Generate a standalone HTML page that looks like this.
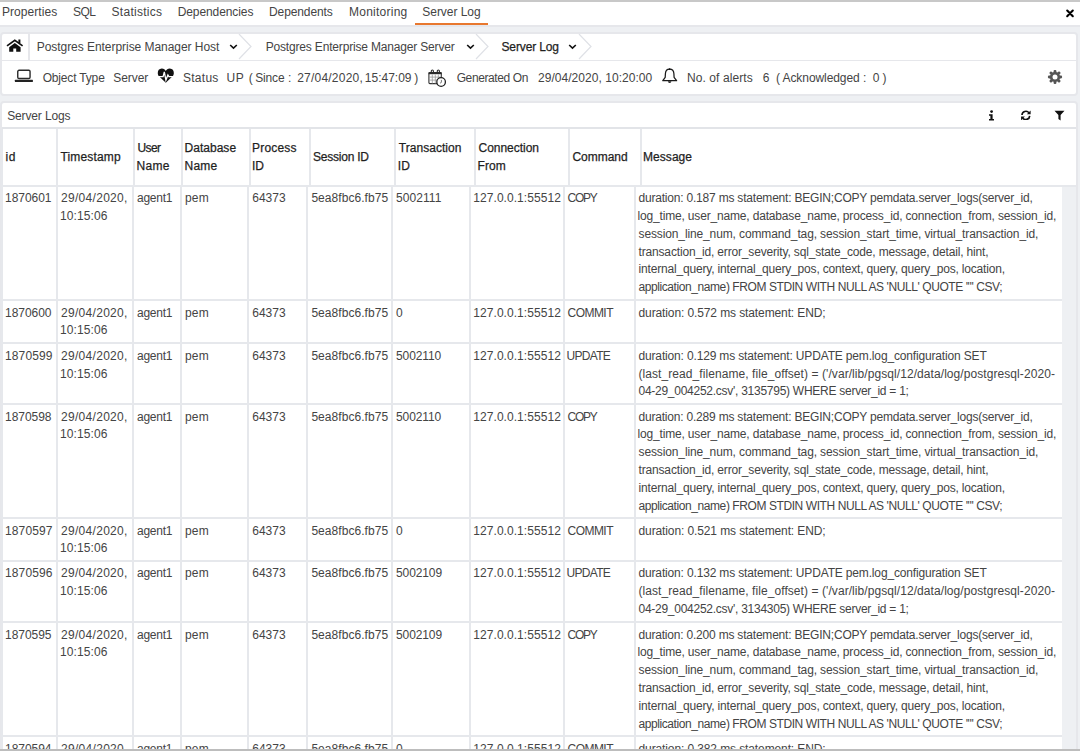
<!DOCTYPE html><html><head><meta charset="utf-8"><style>
*{box-sizing:border-box}
html,body{margin:0;padding:0}
body{width:1080px;height:752px;overflow:hidden;position:relative;background:#fff;font-family:"Liberation Sans",sans-serif;font-size:12px;color:#444}
.t{position:absolute;white-space:nowrap;line-height:14px}
.abs{position:absolute}
.hd{color:#1f1f1f;-webkit-text-stroke:0.25px #1f1f1f}
</style></head><body><div class="abs" style="left:0;top:0;width:1080px;height:2px;background:#c8c8c8"></div>
<div class="abs" style="left:0;top:25px;width:1080px;height:724px;background:#eef0f3"></div>
<div class="t" style="left:2.00px;top:5.00px;letter-spacing:0.056px">Properties</div>
<div class="t" style="left:73.00px;top:5.00px;letter-spacing:-0.600px">SQL</div>
<div class="t" style="left:111.60px;top:5.00px;letter-spacing:0.267px">Statistics</div>
<div class="t" style="left:177.70px;top:5.00px;letter-spacing:-0.091px">Dependencies</div>
<div class="t" style="left:269.00px;top:5.00px;letter-spacing:-0.100px">Dependents</div>
<div class="t" style="left:349.00px;top:5.00px;letter-spacing:0.244px">Monitoring</div>
<div class="t" style="left:422.30px;top:5.00px;letter-spacing:-0.044px">Server Log</div>
<div class="abs" style="left:415px;top:23px;width:73px;height:2px;background:#e8782f"></div>
<svg class="abs" style="left:1064px;top:7px" width="12" height="12" viewBox="0 0 12 12"><path d="M3.2 3.5L8.8 9.2M8.8 3.5L3.2 9.2" stroke="#000" stroke-width="2.1" stroke-linecap="round"/></svg>
<div class="abs" style="left:0;top:25px;width:1080px;height:2px;background:#e6e7eb"></div>
<div class="abs" style="left:2px;top:33.5px;width:1074px;height:60.3px;background:#fff;border-radius:2px;box-shadow:0 0 0 2px #e6e7eb"></div>
<div class="abs" style="left:28px;top:33.5px;width:2px;height:26px;background:#e6e7eb"></div>
<div class="abs" style="left:2px;top:59.5px;width:1074px;height:1.5px;background:#e6e7eb"></div>
<svg class="abs" style="left:6px;top:38px" width="18" height="16" viewBox="0 0 18 16"><path d="M1 7.9L8.8 2.3L16.6 7.9" stroke="#111" stroke-width="1.7" fill="none"/><rect x="12.4" y="1.5" width="2" height="3.5" fill="#111"/><path d="M3.2 9.3L8.8 5.1L14.6 9.3V13.8H10.2V10.5H7.3V13.8H3.2z" fill="#111"/></svg>
<div class="t" style="left:36.70px;top:39.70px;letter-spacing:-0.045px">Postgres Enterprise Manager Host</div>
<div class="t" style="left:265.70px;top:39.70px;letter-spacing:-0.173px">Postgres Enterprise Manager Server</div>
<div class="t hd" style="left:501.50px;top:39.70px;letter-spacing:-0.133px">Server Log</div>
<svg class="abs" style="left:229px;top:43px" width="10" height="8" viewBox="0 0 10 8"><path d="M1.2 2L4.5 5.1L7.8 2" stroke="#111" stroke-width="1.6" fill="none"/></svg>
<svg class="abs" style="left:465.7px;top:43px" width="10" height="8" viewBox="0 0 10 8"><path d="M1.2 2L4.5 5.1L7.8 2" stroke="#111" stroke-width="1.6" fill="none"/></svg>
<svg class="abs" style="left:568px;top:43px" width="10" height="8" viewBox="0 0 10 8"><path d="M1.2 2L4.5 5.1L7.8 2" stroke="#111" stroke-width="1.6" fill="none"/></svg>
<svg class="abs" style="left:237.9px;top:33.5px" width="16" height="26" viewBox="0 0 16 26"><path d="M1 0L13 12.5L1 25" stroke="#dfe1e6" stroke-width="1.2" fill="none"/></svg>
<svg class="abs" style="left:475.3px;top:33.5px" width="16" height="26" viewBox="0 0 16 26"><path d="M1 0L13 12.5L1 25" stroke="#dfe1e6" stroke-width="1.2" fill="none"/></svg>
<svg class="abs" style="left:577.5px;top:33.5px" width="16" height="26" viewBox="0 0 16 26"><path d="M1 0L13 12.5L1 25" stroke="#dfe1e6" stroke-width="1.2" fill="none"/></svg>
<svg class="abs" style="left:14px;top:69px" width="20" height="14" viewBox="0 0 20 14"><rect x="3.75" y="1.3" width="12.3" height="8.2" rx="1.3" fill="none" stroke="#2a2a2a" stroke-width="1.4"/><rect x="0.9" y="10.8" width="18" height="2.1" rx=".5" fill="#222"/></svg>
<div class="t" style="left:42.70px;top:71.00px;letter-spacing:-0.170px">Object Type</div>
<div class="t" style="left:113.30px;top:71.00px;letter-spacing:-0.060px">Server</div>
<svg class="abs" style="left:157px;top:68px" width="18" height="15" viewBox="0 0 18 15"><path d="M8.8 14.8L2 8.3C-.2 6 .5.6 4.8.6C6.9.6 8 1.8 8.8 3C9.6 1.8 10.7.6 12.8.6C17.1.6 17.8 6 15.6 8.3Z" fill="#111"/><path d="M0 8.6H6.1L7.3 3.8L8.9 12.1L10.9 6.9L11.9 8.6H18" stroke="#fff" stroke-width="1.3" fill="none" stroke-linejoin="miter"/></svg>
<div class="t" style="left:183.00px;top:71.00px;letter-spacing:0.260px">Status</div>
<div class="t" style="left:226.40px;top:71.00px;letter-spacing:0.600px">UP</div>
<div class="t" style="left:248.80px;top:71.00px;letter-spacing:0.000px">(</div>
<div class="t" style="left:255.20px;top:71.00px;letter-spacing:-0.150px">Since</div>
<div class="t" style="left:287.90px;top:71.00px;letter-spacing:0.000px">:</div>
<div class="t" style="left:297.20px;top:71.00px;letter-spacing:0.220px">27/04/2020,</div>
<div class="t" style="left:364.80px;top:71.00px;letter-spacing:0.000px">15:47:09</div>
<div class="t" style="left:414.20px;top:71.00px;letter-spacing:0.000px">)</div>
<svg class="abs" style="left:427px;top:69px" width="20" height="19" viewBox="0 0 20 19"><rect x="1.9" y="3.6" width="12.4" height="11" rx="1" fill="none" stroke="#333" stroke-width="1.1"/><rect x="1.6" y="3.2" width="13" height="2" fill="#2a2a2a"/><path d="M4.3 4V2.1a1.05 1.05 0 0 1 2.1 0V4M10.3 4V2.1a1.05 1.05 0 0 1 2.1 0V4" stroke="#2a2a2a" stroke-width="1.1" fill="none"/><path d="M2 8.1h12.2M2 11.1h12.2M5.3 5.5v9M8.3 5.5v9M11.3 5.5v4" stroke="#999" stroke-width=".8"/><circle cx="14.1" cy="13" r="4.3" fill="#fff" stroke="#222" stroke-width="1.3"/><path d="M14.4 10.9V13.4L13 14.2" stroke="#666" stroke-width=".9" fill="none"/></svg>
<div class="t" style="left:456.70px;top:71.00px;letter-spacing:-0.400px">Generated On</div>
<div class="t" style="left:538.00px;top:71.00px;letter-spacing:0.042px">29/04/2020, 10:20:00</div>
<svg class="abs" style="left:661px;top:68px" width="18" height="17" viewBox="0 0 18 17"><path d="M8.6 1.1C5.9 1.1 4.5 3.3 4.4 5.8L4.2 9.3L1.8 12.7H15.6L13.1 9.3L12.9 5.8C12.8 3.3 11.4 1.1 8.6 1.1Z" fill="none" stroke="#1a1a1a" stroke-width="1.25" stroke-linejoin="round"/><circle cx="8.6" cy="1.2" r="0.9" fill="#111"/><path d="M6.9 13.3a1.75 1.75 0 0 0 3.5 0z" fill="#222"/></svg>
<div class="t" style="left:687.00px;top:71.00px;letter-spacing:0.083px">No. of alerts</div>
<div class="t" style="left:762.80px;top:71.00px;letter-spacing:0.000px">6</div>
<div class="t" style="left:776.00px;top:71.00px;letter-spacing:-0.075px">( Acknowledged :&nbsp; 0 )</div>
<svg class="abs" style="left:1046.9px;top:68.8px" width="16" height="16" viewBox="0 0 16 16"><rect x="6.6" y="0.9" width="2.8" height="4" rx="1.1" fill="#555" transform="rotate(0 8 8)"/><rect x="6.6" y="0.9" width="2.8" height="4" rx="1.1" fill="#555" transform="rotate(45 8 8)"/><rect x="6.6" y="0.9" width="2.8" height="4" rx="1.1" fill="#555" transform="rotate(90 8 8)"/><rect x="6.6" y="0.9" width="2.8" height="4" rx="1.1" fill="#555" transform="rotate(135 8 8)"/><rect x="6.6" y="0.9" width="2.8" height="4" rx="1.1" fill="#555" transform="rotate(180 8 8)"/><rect x="6.6" y="0.9" width="2.8" height="4" rx="1.1" fill="#555" transform="rotate(225 8 8)"/><rect x="6.6" y="0.9" width="2.8" height="4" rx="1.1" fill="#555" transform="rotate(270 8 8)"/><rect x="6.6" y="0.9" width="2.8" height="4" rx="1.1" fill="#555" transform="rotate(315 8 8)"/><circle cx="8" cy="8" r="5.1" fill="#555"/><circle cx="8" cy="8" r="2.5" fill="#fff"/></svg>
<div class="abs" style="left:2px;top:103px;width:1074px;height:646px;background:#fff;border-radius:2px 2px 0 0;box-shadow:0 0 0 2px #e6e7eb"></div>
<div class="t" style="left:7.20px;top:108.70px;letter-spacing:-0.140px">Server Logs</div>
<div class="abs" style="left:2px;top:127px;width:1074px;height:2px;background:#e2e4e8"></div>
<svg class="abs" style="left:988px;top:109.7px" width="7" height="11" viewBox="0 0 7 11"><circle cx="3.6" cy="1.6" r="1.4" fill="#111"/><path d="M1 4.2h3.6v4.8h1.4v1.6H1V9h1.4V5.8H1z" fill="#111"/></svg>
<svg class="abs" style="left:1019.6px;top:109.7px" width="11.7" height="10.8" viewBox="0 0 13 12"><path d="M2.2 5.5A4.3 4.3 0 0 1 10 3.2" stroke="#111" stroke-width="1.8" fill="none"/><path d="M11.8.5v4.2H7.6z" fill="#111"/><path d="M10.8 6.5A4.3 4.3 0 0 1 3 8.8" stroke="#111" stroke-width="1.8" fill="none"/><path d="M1.2 11.5V7.3h4.2z" fill="#111"/></svg>
<svg class="abs" style="left:1054px;top:110px" width="11" height="11" viewBox="0 0 11 11"><path d="M.5 .8h10L6.6 5v5.5L4.4 9V5z" fill="#111"/></svg>
<div class="abs" style="left:1px;top:129px;width:2px;height:56.5px;background:#e6e8ec"></div>
<div class="abs" style="left:56px;top:129px;width:2px;height:56.5px;background:#e6e8ec"></div>
<div class="abs" style="left:133px;top:129px;width:2px;height:56.5px;background:#e6e8ec"></div>
<div class="abs" style="left:181px;top:129px;width:2px;height:56.5px;background:#e6e8ec"></div>
<div class="abs" style="left:248.6px;top:129px;width:2px;height:56.5px;background:#e6e8ec"></div>
<div class="abs" style="left:308.6px;top:129px;width:2px;height:56.5px;background:#e6e8ec"></div>
<div class="abs" style="left:394.3px;top:129px;width:2px;height:56.5px;background:#e6e8ec"></div>
<div class="abs" style="left:474px;top:129px;width:2px;height:56.5px;background:#e6e8ec"></div>
<div class="abs" style="left:568px;top:129px;width:2px;height:56.5px;background:#e6e8ec"></div>
<div class="abs" style="left:639.6px;top:129px;width:2px;height:56.5px;background:#e6e8ec"></div>
<div class="abs" style="left:1px;top:184.5px;width:1075px;height:2px;background:#e6e8ec"></div>
<div class="t hd" style="left:5.50px;top:149.90px;letter-spacing:0.600px">id</div>
<div class="t hd" style="left:60.50px;top:149.90px;letter-spacing:0.162px">Timestamp</div>
<div class="t hd" style="left:137.50px;top:141.10px;letter-spacing:-0.633px">User</div>
<div class="t hd" style="left:136.50px;top:159.00px;letter-spacing:0.300px">Name</div>
<div class="t hd" style="left:184.50px;top:141.10px;letter-spacing:0.029px">Database</div>
<div class="t hd" style="left:184.50px;top:159.00px;letter-spacing:0.233px">Name</div>
<div class="t hd" style="left:252.10px;top:141.10px;letter-spacing:0.183px">Process</div>
<div class="t hd" style="left:252.10px;top:159.00px;letter-spacing:-0.100px">ID</div>
<div class="t hd" style="left:313.10px;top:149.90px;letter-spacing:-0.233px">Session ID</div>
<div class="t hd" style="left:398.80px;top:141.10px;letter-spacing:0.040px">Transaction</div>
<div class="t hd" style="left:397.80px;top:159.00px;letter-spacing:0.000px">ID</div>
<div class="t hd" style="left:478.50px;top:141.10px;letter-spacing:-0.022px">Connection</div>
<div class="t hd" style="left:477.50px;top:159.00px;letter-spacing:0.067px">From</div>
<div class="t hd" style="left:572.50px;top:149.90px;letter-spacing:-0.050px">Command</div>
<div class="t hd" style="left:643.10px;top:149.90px;letter-spacing:0.033px">Message</div>
<div class="abs" style="left:1px;top:185.6px;width:2px;height:114.4px;background:#e6e8ec"></div>
<div class="abs" style="left:56px;top:185.6px;width:2px;height:114.4px;background:#e6e8ec"></div>
<div class="abs" style="left:132px;top:185.6px;width:2px;height:114.4px;background:#e6e8ec"></div>
<div class="abs" style="left:180px;top:185.6px;width:2px;height:114.4px;background:#e6e8ec"></div>
<div class="abs" style="left:247.2px;top:185.6px;width:2px;height:114.4px;background:#e6e8ec"></div>
<div class="abs" style="left:306.4px;top:185.6px;width:2px;height:114.4px;background:#e6e8ec"></div>
<div class="abs" style="left:391px;top:185.6px;width:2px;height:114.4px;background:#e6e8ec"></div>
<div class="abs" style="left:469.3px;top:185.6px;width:2px;height:114.4px;background:#e6e8ec"></div>
<div class="abs" style="left:562.5px;top:185.6px;width:2px;height:114.4px;background:#e6e8ec"></div>
<div class="abs" style="left:633.5px;top:185.6px;width:2px;height:114.4px;background:#e6e8ec"></div>
<div class="t" style="left:5.00px;top:191.10px;letter-spacing:-0.033px">1870601</div>
<div class="t" style="left:61.00px;top:191.10px;letter-spacing:0.300px">29/04/2020,</div>
<div class="t" style="left:60.00px;top:208.90px;letter-spacing:0.100px">10:15:06</div>
<div class="t" style="left:137.00px;top:191.10px;letter-spacing:-0.260px">agent1</div>
<div class="t" style="left:185.00px;top:191.10px;letter-spacing:0.200px">pem</div>
<div class="t" style="left:252.20px;top:191.10px;letter-spacing:0.025px">64373</div>
<div class="t" style="left:311.40px;top:191.10px;letter-spacing:0.050px">5ea8fbc6.fb75</div>
<div class="t" style="left:396.00px;top:191.10px;letter-spacing:0.067px">5002111</div>
<div class="t" style="left:473.30px;top:191.10px;letter-spacing:0.057px">127.0.0.1:55512</div>
<div class="t" style="left:567.50px;top:191.10px;letter-spacing:-1.267px">COPY</div>
<div class="t" style="left:638.50px;top:191.10px;letter-spacing:-0.204px">duration: 0.187 ms statement: BEGIN;COPY pemdata.server_logs(server_id,</div>
<div class="t" style="left:637.50px;top:208.90px;letter-spacing:-0.171px">log_time, user_name, database_name, process_id, connection_from, session_id,</div>
<div class="t" style="left:638.50px;top:226.70px;letter-spacing:-0.123px">session_line_num, command_tag, session_start_time, virtual_transaction_id,</div>
<div class="t" style="left:638.50px;top:244.50px;letter-spacing:-0.162px">transaction_id, error_severity, sql_state_code, message, detail, hint,</div>
<div class="t" style="left:638.50px;top:262.30px;letter-spacing:-0.177px">internal_query, internal_query_pos, context, query, query_pos, location,</div>
<div class="t" style="left:638.50px;top:280.10px;letter-spacing:-0.418px">application_name) FROM STDIN WITH NULL AS 'NULL' QUOTE '"' CSV;</div>
<div class="abs" style="left:1px;top:300px;width:2px;height:43.19999999999999px;background:#e6e8ec"></div>
<div class="abs" style="left:56px;top:300px;width:2px;height:43.19999999999999px;background:#e6e8ec"></div>
<div class="abs" style="left:132px;top:300px;width:2px;height:43.19999999999999px;background:#e6e8ec"></div>
<div class="abs" style="left:180px;top:300px;width:2px;height:43.19999999999999px;background:#e6e8ec"></div>
<div class="abs" style="left:247.2px;top:300px;width:2px;height:43.19999999999999px;background:#e6e8ec"></div>
<div class="abs" style="left:306.4px;top:300px;width:2px;height:43.19999999999999px;background:#e6e8ec"></div>
<div class="abs" style="left:391px;top:300px;width:2px;height:43.19999999999999px;background:#e6e8ec"></div>
<div class="abs" style="left:469.3px;top:300px;width:2px;height:43.19999999999999px;background:#e6e8ec"></div>
<div class="abs" style="left:562.5px;top:300px;width:2px;height:43.19999999999999px;background:#e6e8ec"></div>
<div class="abs" style="left:633.5px;top:300px;width:2px;height:43.19999999999999px;background:#e6e8ec"></div>
<div class="abs" style="left:1px;top:299px;width:1061px;height:2px;background:#e6e8ec"></div>
<div class="t" style="left:5.00px;top:305.50px;letter-spacing:-0.033px">1870600</div>
<div class="t" style="left:61.00px;top:305.50px;letter-spacing:0.300px">29/04/2020,</div>
<div class="t" style="left:60.00px;top:323.30px;letter-spacing:0.100px">10:15:06</div>
<div class="t" style="left:137.00px;top:305.50px;letter-spacing:-0.260px">agent1</div>
<div class="t" style="left:185.00px;top:305.50px;letter-spacing:0.200px">pem</div>
<div class="t" style="left:252.20px;top:305.50px;letter-spacing:0.025px">64373</div>
<div class="t" style="left:311.40px;top:305.50px;letter-spacing:0.050px">5ea8fbc6.fb75</div>
<div class="t" style="left:396.00px;top:305.50px;letter-spacing:0.000px">0</div>
<div class="t" style="left:473.30px;top:305.50px;letter-spacing:0.057px">127.0.0.1:55512</div>
<div class="t" style="left:567.50px;top:305.50px;letter-spacing:-0.540px">COMMIT</div>
<div class="t" style="left:638.50px;top:305.50px;letter-spacing:-0.109px">duration: 0.572 ms statement: END;</div>
<div class="abs" style="left:1px;top:343.2px;width:2px;height:60.900000000000034px;background:#e6e8ec"></div>
<div class="abs" style="left:56px;top:343.2px;width:2px;height:60.900000000000034px;background:#e6e8ec"></div>
<div class="abs" style="left:132px;top:343.2px;width:2px;height:60.900000000000034px;background:#e6e8ec"></div>
<div class="abs" style="left:180px;top:343.2px;width:2px;height:60.900000000000034px;background:#e6e8ec"></div>
<div class="abs" style="left:247.2px;top:343.2px;width:2px;height:60.900000000000034px;background:#e6e8ec"></div>
<div class="abs" style="left:306.4px;top:343.2px;width:2px;height:60.900000000000034px;background:#e6e8ec"></div>
<div class="abs" style="left:391px;top:343.2px;width:2px;height:60.900000000000034px;background:#e6e8ec"></div>
<div class="abs" style="left:469.3px;top:343.2px;width:2px;height:60.900000000000034px;background:#e6e8ec"></div>
<div class="abs" style="left:562.5px;top:343.2px;width:2px;height:60.900000000000034px;background:#e6e8ec"></div>
<div class="abs" style="left:633.5px;top:343.2px;width:2px;height:60.900000000000034px;background:#e6e8ec"></div>
<div class="abs" style="left:1px;top:342.2px;width:1061px;height:2px;background:#e6e8ec"></div>
<div class="t" style="left:5.00px;top:348.70px;letter-spacing:0.133px">1870599</div>
<div class="t" style="left:61.00px;top:348.70px;letter-spacing:0.300px">29/04/2020,</div>
<div class="t" style="left:60.00px;top:366.50px;letter-spacing:0.100px">10:15:06</div>
<div class="t" style="left:137.00px;top:348.70px;letter-spacing:-0.260px">agent1</div>
<div class="t" style="left:185.00px;top:348.70px;letter-spacing:0.200px">pem</div>
<div class="t" style="left:252.20px;top:348.70px;letter-spacing:0.025px">64373</div>
<div class="t" style="left:311.40px;top:348.70px;letter-spacing:0.050px">5ea8fbc6.fb75</div>
<div class="t" style="left:396.00px;top:348.70px;letter-spacing:-0.100px">5002110</div>
<div class="t" style="left:473.30px;top:348.70px;letter-spacing:0.057px">127.0.0.1:55512</div>
<div class="t" style="left:566.50px;top:348.70px;letter-spacing:-0.700px">UPDATE</div>
<div class="t" style="left:638.50px;top:348.70px;letter-spacing:-0.159px">duration: 0.129 ms statement: UPDATE pem.log_configuration SET</div>
<div class="t" style="left:638.50px;top:366.50px;letter-spacing:0.072px">(last_read_filename, file_offset) = ('/var/lib/pgsql/12/data/log/postgresql-2020-</div>
<div class="t" style="left:638.50px;top:384.30px;letter-spacing:-0.264px">04-29_004252.csv', 3135795) WHERE server_id = 1;</div>
<div class="abs" style="left:1px;top:404.1px;width:2px;height:114.0px;background:#e6e8ec"></div>
<div class="abs" style="left:56px;top:404.1px;width:2px;height:114.0px;background:#e6e8ec"></div>
<div class="abs" style="left:132px;top:404.1px;width:2px;height:114.0px;background:#e6e8ec"></div>
<div class="abs" style="left:180px;top:404.1px;width:2px;height:114.0px;background:#e6e8ec"></div>
<div class="abs" style="left:247.2px;top:404.1px;width:2px;height:114.0px;background:#e6e8ec"></div>
<div class="abs" style="left:306.4px;top:404.1px;width:2px;height:114.0px;background:#e6e8ec"></div>
<div class="abs" style="left:391px;top:404.1px;width:2px;height:114.0px;background:#e6e8ec"></div>
<div class="abs" style="left:469.3px;top:404.1px;width:2px;height:114.0px;background:#e6e8ec"></div>
<div class="abs" style="left:562.5px;top:404.1px;width:2px;height:114.0px;background:#e6e8ec"></div>
<div class="abs" style="left:633.5px;top:404.1px;width:2px;height:114.0px;background:#e6e8ec"></div>
<div class="abs" style="left:1px;top:403.1px;width:1061px;height:2px;background:#e6e8ec"></div>
<div class="t" style="left:5.00px;top:409.60px;letter-spacing:-0.033px">1870598</div>
<div class="t" style="left:61.00px;top:409.60px;letter-spacing:0.300px">29/04/2020,</div>
<div class="t" style="left:60.00px;top:427.40px;letter-spacing:0.100px">10:15:06</div>
<div class="t" style="left:137.00px;top:409.60px;letter-spacing:-0.260px">agent1</div>
<div class="t" style="left:185.00px;top:409.60px;letter-spacing:0.200px">pem</div>
<div class="t" style="left:252.20px;top:409.60px;letter-spacing:0.025px">64373</div>
<div class="t" style="left:311.40px;top:409.60px;letter-spacing:0.050px">5ea8fbc6.fb75</div>
<div class="t" style="left:396.00px;top:409.60px;letter-spacing:-0.100px">5002110</div>
<div class="t" style="left:473.30px;top:409.60px;letter-spacing:0.057px">127.0.0.1:55512</div>
<div class="t" style="left:567.50px;top:409.60px;letter-spacing:-1.267px">COPY</div>
<div class="t" style="left:638.50px;top:409.60px;letter-spacing:-0.204px">duration: 0.289 ms statement: BEGIN;COPY pemdata.server_logs(server_id,</div>
<div class="t" style="left:637.50px;top:427.40px;letter-spacing:-0.171px">log_time, user_name, database_name, process_id, connection_from, session_id,</div>
<div class="t" style="left:638.50px;top:445.20px;letter-spacing:-0.123px">session_line_num, command_tag, session_start_time, virtual_transaction_id,</div>
<div class="t" style="left:638.50px;top:463.00px;letter-spacing:-0.162px">transaction_id, error_severity, sql_state_code, message, detail, hint,</div>
<div class="t" style="left:638.50px;top:480.80px;letter-spacing:-0.177px">internal_query, internal_query_pos, context, query, query_pos, location,</div>
<div class="t" style="left:638.50px;top:498.60px;letter-spacing:-0.418px">application_name) FROM STDIN WITH NULL AS 'NULL' QUOTE '"' CSV;</div>
<div class="abs" style="left:1px;top:518.1px;width:2px;height:42.60000000000002px;background:#e6e8ec"></div>
<div class="abs" style="left:56px;top:518.1px;width:2px;height:42.60000000000002px;background:#e6e8ec"></div>
<div class="abs" style="left:132px;top:518.1px;width:2px;height:42.60000000000002px;background:#e6e8ec"></div>
<div class="abs" style="left:180px;top:518.1px;width:2px;height:42.60000000000002px;background:#e6e8ec"></div>
<div class="abs" style="left:247.2px;top:518.1px;width:2px;height:42.60000000000002px;background:#e6e8ec"></div>
<div class="abs" style="left:306.4px;top:518.1px;width:2px;height:42.60000000000002px;background:#e6e8ec"></div>
<div class="abs" style="left:391px;top:518.1px;width:2px;height:42.60000000000002px;background:#e6e8ec"></div>
<div class="abs" style="left:469.3px;top:518.1px;width:2px;height:42.60000000000002px;background:#e6e8ec"></div>
<div class="abs" style="left:562.5px;top:518.1px;width:2px;height:42.60000000000002px;background:#e6e8ec"></div>
<div class="abs" style="left:633.5px;top:518.1px;width:2px;height:42.60000000000002px;background:#e6e8ec"></div>
<div class="abs" style="left:1px;top:517.1px;width:1061px;height:2px;background:#e6e8ec"></div>
<div class="t" style="left:5.00px;top:523.60px;letter-spacing:0.133px">1870597</div>
<div class="t" style="left:61.00px;top:523.60px;letter-spacing:0.300px">29/04/2020,</div>
<div class="t" style="left:60.00px;top:541.40px;letter-spacing:0.100px">10:15:06</div>
<div class="t" style="left:137.00px;top:523.60px;letter-spacing:-0.260px">agent1</div>
<div class="t" style="left:185.00px;top:523.60px;letter-spacing:0.200px">pem</div>
<div class="t" style="left:252.20px;top:523.60px;letter-spacing:0.025px">64373</div>
<div class="t" style="left:311.40px;top:523.60px;letter-spacing:0.050px">5ea8fbc6.fb75</div>
<div class="t" style="left:396.00px;top:523.60px;letter-spacing:0.000px">0</div>
<div class="t" style="left:473.30px;top:523.60px;letter-spacing:0.057px">127.0.0.1:55512</div>
<div class="t" style="left:567.50px;top:523.60px;letter-spacing:-0.540px">COMMIT</div>
<div class="t" style="left:638.50px;top:523.60px;letter-spacing:-0.109px">duration: 0.521 ms statement: END;</div>
<div class="abs" style="left:1px;top:560.7px;width:2px;height:61.299999999999955px;background:#e6e8ec"></div>
<div class="abs" style="left:56px;top:560.7px;width:2px;height:61.299999999999955px;background:#e6e8ec"></div>
<div class="abs" style="left:132px;top:560.7px;width:2px;height:61.299999999999955px;background:#e6e8ec"></div>
<div class="abs" style="left:180px;top:560.7px;width:2px;height:61.299999999999955px;background:#e6e8ec"></div>
<div class="abs" style="left:247.2px;top:560.7px;width:2px;height:61.299999999999955px;background:#e6e8ec"></div>
<div class="abs" style="left:306.4px;top:560.7px;width:2px;height:61.299999999999955px;background:#e6e8ec"></div>
<div class="abs" style="left:391px;top:560.7px;width:2px;height:61.299999999999955px;background:#e6e8ec"></div>
<div class="abs" style="left:469.3px;top:560.7px;width:2px;height:61.299999999999955px;background:#e6e8ec"></div>
<div class="abs" style="left:562.5px;top:560.7px;width:2px;height:61.299999999999955px;background:#e6e8ec"></div>
<div class="abs" style="left:633.5px;top:560.7px;width:2px;height:61.299999999999955px;background:#e6e8ec"></div>
<div class="abs" style="left:1px;top:559.7px;width:1061px;height:2px;background:#e6e8ec"></div>
<div class="t" style="left:5.00px;top:566.20px;letter-spacing:0.133px">1870596</div>
<div class="t" style="left:61.00px;top:566.20px;letter-spacing:0.300px">29/04/2020,</div>
<div class="t" style="left:60.00px;top:584.00px;letter-spacing:0.100px">10:15:06</div>
<div class="t" style="left:137.00px;top:566.20px;letter-spacing:-0.260px">agent1</div>
<div class="t" style="left:185.00px;top:566.20px;letter-spacing:0.200px">pem</div>
<div class="t" style="left:252.20px;top:566.20px;letter-spacing:0.025px">64373</div>
<div class="t" style="left:311.40px;top:566.20px;letter-spacing:0.050px">5ea8fbc6.fb75</div>
<div class="t" style="left:396.00px;top:566.20px;letter-spacing:-0.100px">5002109</div>
<div class="t" style="left:473.30px;top:566.20px;letter-spacing:0.057px">127.0.0.1:55512</div>
<div class="t" style="left:566.50px;top:566.20px;letter-spacing:-0.700px">UPDATE</div>
<div class="t" style="left:638.50px;top:566.20px;letter-spacing:-0.159px">duration: 0.132 ms statement: UPDATE pem.log_configuration SET</div>
<div class="t" style="left:638.50px;top:584.00px;letter-spacing:0.072px">(last_read_filename, file_offset) = ('/var/lib/pgsql/12/data/log/postgresql-2020-</div>
<div class="t" style="left:638.50px;top:601.80px;letter-spacing:-0.264px">04-29_004252.csv', 3134305) WHERE server_id = 1;</div>
<div class="abs" style="left:1px;top:622px;width:2px;height:114px;background:#e6e8ec"></div>
<div class="abs" style="left:56px;top:622px;width:2px;height:114px;background:#e6e8ec"></div>
<div class="abs" style="left:132px;top:622px;width:2px;height:114px;background:#e6e8ec"></div>
<div class="abs" style="left:180px;top:622px;width:2px;height:114px;background:#e6e8ec"></div>
<div class="abs" style="left:247.2px;top:622px;width:2px;height:114px;background:#e6e8ec"></div>
<div class="abs" style="left:306.4px;top:622px;width:2px;height:114px;background:#e6e8ec"></div>
<div class="abs" style="left:391px;top:622px;width:2px;height:114px;background:#e6e8ec"></div>
<div class="abs" style="left:469.3px;top:622px;width:2px;height:114px;background:#e6e8ec"></div>
<div class="abs" style="left:562.5px;top:622px;width:2px;height:114px;background:#e6e8ec"></div>
<div class="abs" style="left:633.5px;top:622px;width:2px;height:114px;background:#e6e8ec"></div>
<div class="abs" style="left:1px;top:621px;width:1061px;height:2px;background:#e6e8ec"></div>
<div class="t" style="left:5.00px;top:627.50px;letter-spacing:-0.033px">1870595</div>
<div class="t" style="left:61.00px;top:627.50px;letter-spacing:0.300px">29/04/2020,</div>
<div class="t" style="left:60.00px;top:645.30px;letter-spacing:0.100px">10:15:06</div>
<div class="t" style="left:137.00px;top:627.50px;letter-spacing:-0.260px">agent1</div>
<div class="t" style="left:185.00px;top:627.50px;letter-spacing:0.200px">pem</div>
<div class="t" style="left:252.20px;top:627.50px;letter-spacing:0.025px">64373</div>
<div class="t" style="left:311.40px;top:627.50px;letter-spacing:0.050px">5ea8fbc6.fb75</div>
<div class="t" style="left:396.00px;top:627.50px;letter-spacing:-0.100px">5002109</div>
<div class="t" style="left:473.30px;top:627.50px;letter-spacing:0.057px">127.0.0.1:55512</div>
<div class="t" style="left:567.50px;top:627.50px;letter-spacing:-1.267px">COPY</div>
<div class="t" style="left:638.50px;top:627.50px;letter-spacing:-0.204px">duration: 0.200 ms statement: BEGIN;COPY pemdata.server_logs(server_id,</div>
<div class="t" style="left:637.50px;top:645.30px;letter-spacing:-0.171px">log_time, user_name, database_name, process_id, connection_from, session_id,</div>
<div class="t" style="left:638.50px;top:663.10px;letter-spacing:-0.123px">session_line_num, command_tag, session_start_time, virtual_transaction_id,</div>
<div class="t" style="left:638.50px;top:680.90px;letter-spacing:-0.162px">transaction_id, error_severity, sql_state_code, message, detail, hint,</div>
<div class="t" style="left:638.50px;top:698.70px;letter-spacing:-0.177px">internal_query, internal_query_pos, context, query, query_pos, location,</div>
<div class="t" style="left:638.50px;top:716.50px;letter-spacing:-0.418px">application_name) FROM STDIN WITH NULL AS 'NULL' QUOTE '"' CSV;</div>
<div class="abs" style="left:1px;top:736px;width:2px;height:24px;background:#e6e8ec"></div>
<div class="abs" style="left:56px;top:736px;width:2px;height:24px;background:#e6e8ec"></div>
<div class="abs" style="left:132px;top:736px;width:2px;height:24px;background:#e6e8ec"></div>
<div class="abs" style="left:180px;top:736px;width:2px;height:24px;background:#e6e8ec"></div>
<div class="abs" style="left:247.2px;top:736px;width:2px;height:24px;background:#e6e8ec"></div>
<div class="abs" style="left:306.4px;top:736px;width:2px;height:24px;background:#e6e8ec"></div>
<div class="abs" style="left:391px;top:736px;width:2px;height:24px;background:#e6e8ec"></div>
<div class="abs" style="left:469.3px;top:736px;width:2px;height:24px;background:#e6e8ec"></div>
<div class="abs" style="left:562.5px;top:736px;width:2px;height:24px;background:#e6e8ec"></div>
<div class="abs" style="left:633.5px;top:736px;width:2px;height:24px;background:#e6e8ec"></div>
<div class="abs" style="left:1px;top:735px;width:1061px;height:2px;background:#e6e8ec"></div>
<div class="t" style="left:5.00px;top:741.50px;letter-spacing:-0.033px">1870594</div>
<div class="t" style="left:61.00px;top:741.50px;letter-spacing:0.300px">29/04/2020,</div>
<div class="t" style="left:60.00px;top:759.30px;letter-spacing:0.100px">10:15:06</div>
<div class="t" style="left:137.00px;top:741.50px;letter-spacing:-0.260px">agent1</div>
<div class="t" style="left:185.00px;top:741.50px;letter-spacing:0.200px">pem</div>
<div class="t" style="left:252.20px;top:741.50px;letter-spacing:0.025px">64373</div>
<div class="t" style="left:311.40px;top:741.50px;letter-spacing:0.050px">5ea8fbc6.fb75</div>
<div class="t" style="left:396.00px;top:741.50px;letter-spacing:0.000px">0</div>
<div class="t" style="left:473.30px;top:741.50px;letter-spacing:0.057px">127.0.0.1:55512</div>
<div class="t" style="left:567.50px;top:741.50px;letter-spacing:-0.540px">COMMIT</div>
<div class="t" style="left:638.50px;top:741.50px;letter-spacing:-0.109px">duration: 0.382 ms statement: END;</div>
<div class="abs" style="left:1062px;top:186.5px;width:14px;height:562.5px;background:#eef0f3"></div>
<div class="abs" style="left:0;top:749px;width:1080px;height:2px;background:#bdbdbd"></div>
<div class="abs" style="left:0;top:751px;width:1080px;height:1px;background:#fff"></div></body></html>
